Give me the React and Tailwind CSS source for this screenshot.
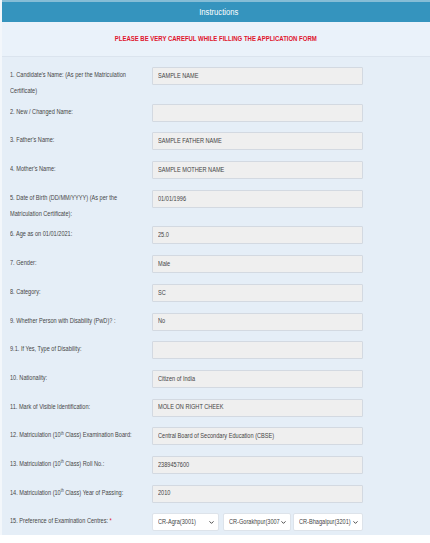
import { ChevronDown } from "lucide-react";

const Th = () => <span className="text-[4.5px] relative -top-[2.5px] leading-none">th</span>;

const rows = [
  { label: "1. Candidate's Name: (As per the Matriculation Certificate)", value: "SAMPLE NAME", tall: true },
  { label: "2. New / Changed Name:", value: "" },
  { label: "3. Father's Name:", value: "SAMPLE FATHER NAME" },
  { label: "4. Mother's Name:", value: "SAMPLE MOTHER NAME" },
  { label: "5. Date of Birth (DD/MM/YYYY) (As per the Matriculation Certificate):", value: "01/01/1996", tall: true },
  { label: "6. Age as on 01/01/2021:", value: "25.0" },
  { label: "7. Gender:", value: "Male" },
  { label: "8. Category:", value: "SC" },
  { label: "9. Whether Person with Disability (PwD)? :", value: "No" },
  { label: "9.1. If Yes, Type of Disability:", value: "" },
  { label: "10. Nationality:", value: "Citizen of India" },
  { label: "11. Mark of Visible Identification:", value: "MOLE ON RIGHT CHEEK" },
  {
    label: (
      <>
        12. Matriculation (10<Th /> Class) Examination Board:
      </>
    ),
    value: "Central Board of Secondary Education (CBSE)",
  },
  {
    label: (
      <>
        13. Matriculation (10<Th /> Class) Roll No.:
      </>
    ),
    value: "2389457600",
  },
  {
    label: (
      <>
        14. Matriculation (10<Th /> Class) Year of Passing:
      </>
    ),
    value: "2010",
  },
];

const centres = [
  { name: "CR-Agra(3001)", w: "w-[67px]", ml: "" },
  { name: "CR-Gorakhpur(3007", w: "w-[68px]", ml: "ml-[4px]" },
  { name: "CR-Bhagalpur(3201)", w: "w-[70px]", ml: "ml-[2px]" },
];

// the form's font is a narrow one; squeeze Liberation Sans to match
function Narrow({ children, wrap }) {
  return (
    <span
      className={`inline-block origin-left scale-x-[0.8] ${wrap ? "w-[172px]" : "whitespace-nowrap"}`}
    >
      {children}
    </span>
  );
}

function Row({ label, value, tall }) {
  return (
    <div className={`flex items-start ${tall ? "h-[26px]" : "h-[18px]"}`}>
      <div className="w-[150px] shrink-0 pl-[8px] leading-[16px] text-[#464646]">
        <Narrow wrap>{label}</Narrow>
      </div>
      <div className="w-[211px] h-[18px] bg-[#efefef] border border-[#d3d9e1] rounded-[1px] pl-[5px] flex items-center text-[#444]">
        <Narrow>{value}</Narrow>
      </div>
    </div>
  );
}

export default function App() {
  return (
    <div
      className="w-[430px] h-[543px] bg-white text-[7px] overflow-hidden"
      style={{ fontFamily: '"Liberation Sans", Arial, sans-serif' }}
    >
      <div className="border-l-[2px] border-[#f3f7fb]">
        <div className="h-[22px] bg-[#3594be] border-t-[2px] border-[#86bdd6] flex items-center justify-center text-white text-[8.5px]">
          <span className="inline-block scale-x-[0.9] translate-x-[3px]">Instructions</span>
        </div>
        <div className="h-[35px] bg-[#eaf2fa] border-b border-[#dbe4ee] flex items-center justify-center font-bold text-[#e0142c] text-[6.8px]">
          <span className="inline-block scale-x-[0.88] whitespace-nowrap">
            PLEASE BE VERY CAREFUL WHILE FILLING THE APPLICATION FORM
          </span>
        </div>
        <div className="bg-[#e5eef7] pt-[10px] pb-[4px] flex flex-col gap-[10.7px]">
          {rows.map((r, i) => (
            <Row key={i} {...r} />
          ))}
          <div className="flex items-start h-[18px]">
            <div className="w-[150px] shrink-0 pl-[8px] leading-[16px] text-[#464646]">
              <Narrow wrap>
                15. Preference of Examination Centres: <span className="text-[#e0142c]">*</span>
              </Narrow>
            </div>
            {centres.map((c) => (
              <div
                key={c.name}
                className={`${c.w} ${c.ml} h-[18px] bg-white border border-[#dde3ea] rounded-[2px] pl-[5px] pr-[3px] flex items-center text-[#444]`}
              >
                <div className="flex-1 min-w-0">
                  <Narrow>{c.name}</Narrow>
                </div>
                <ChevronDown className="w-[7px] h-[7px] shrink-0 ml-[2px]" strokeWidth={3} color="#333" />
              </div>
            ))}
          </div>
        </div>
      </div>
    </div>
  );
}
